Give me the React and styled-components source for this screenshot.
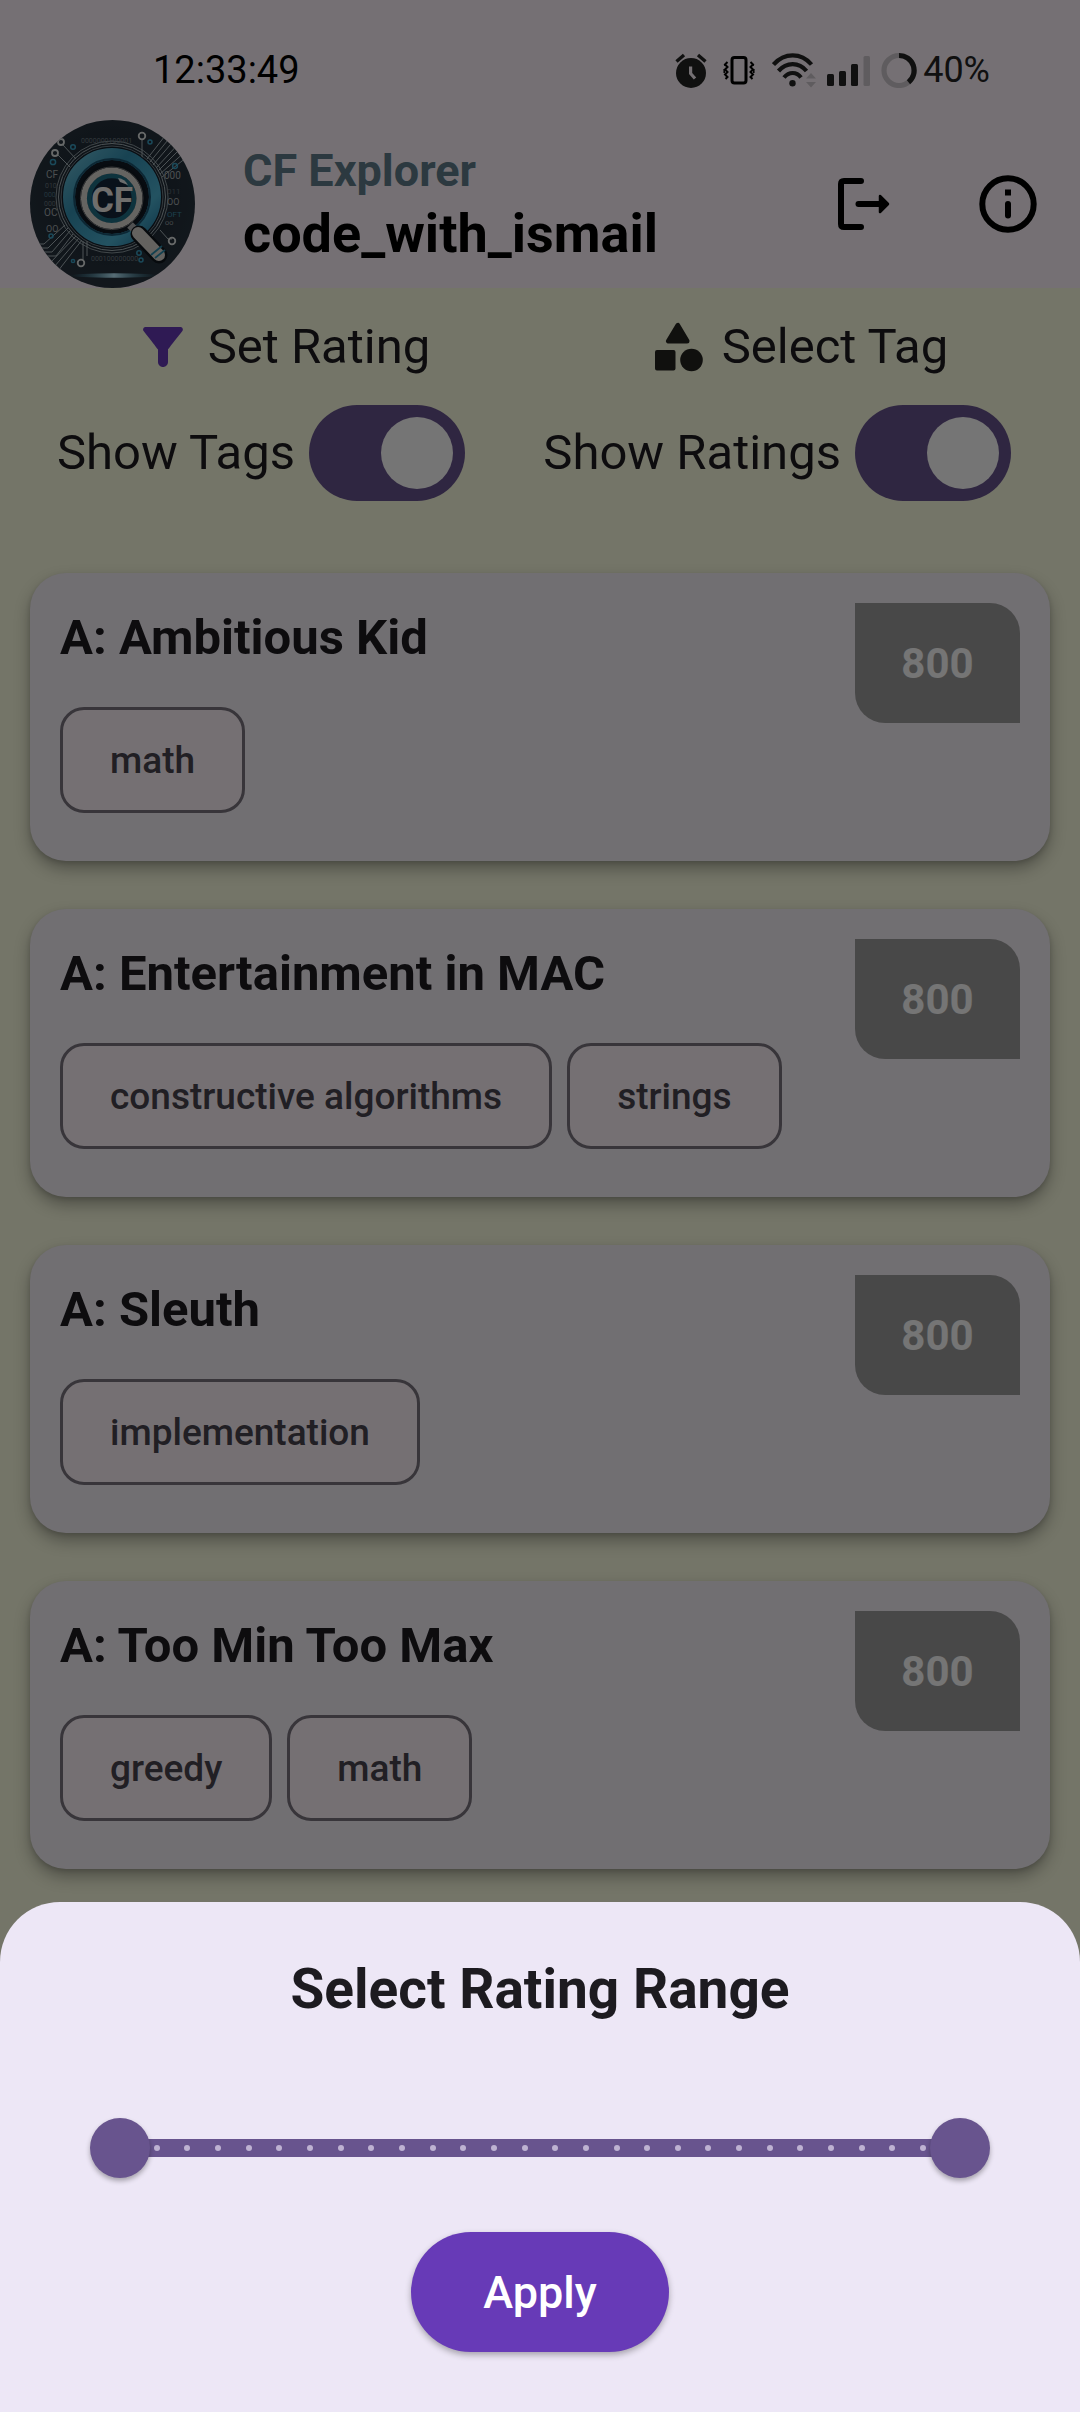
import React, { useState } from "react";
import styled, { createGlobalStyle } from "styled-components";

const GlobalStyle = createGlobalStyle`
  *, *::before, *::after { box-sizing: border-box; }
  body {
    margin: 0;
    font-family: Roboto, "Noto Sans", sans-serif;
    color: #1d1b20;
    background: #fcfee2;
  }
  h1, h2, p, ul { margin: 0; padding: 0; }
  ul { list-style: none; }
  button, input { font: inherit; }
`;

const Page = styled.div`
  min-height: 100vh;
  background: #fcfee2;
`;

const Header = styled.header`
  background: #fff5fc;
  color: #000000;
`;

const StatusBar = styled.div`
  height: 120px;
  padding: 20px 90px 0 153px;
  display: flex;
  align-items: center;
  justify-content: space-between;
  line-height: 48px;
`;

const Clock = styled.span`
  font-size: 38px;
`;

const StatusIcons = styled.div`
  display: flex;
  align-items: center;
  color: #242424;
  font-size: 36px;
`;

const StatusIcon = styled.svg`
  display: block;
  height: 36px;
  width: ${(p) => p.$width}px;
  margin-right: ${(p) => p.$gap}px;
`;

const Toolbar = styled.div`
  height: 168px;
  padding-left: 30px;
  display: flex;
  align-items: center;
`;

const Avatar = styled.svg`
  width: 165px;
  height: 168px;
  border-radius: 50%;
  flex: none;
`;

const Titles = styled.div`
  flex: 1;
  padding-left: 48px;
`;

const AppName = styled.p`
  font-size: 45px;
  line-height: 60px;
  font-weight: 700;
  color: #607d8b;
`;

const Handle = styled.h1`
  font-size: 54px;
  line-height: 66px;
  font-weight: 700;
`;

const IconButton = styled.button`
  width: 144px;
  height: 144px;
  padding: 36px;
  border: 0;
  background: none;
  color: inherit;

  svg { display: block; width: 72px; height: 72px; }
`;

const Filters = styled.section`
  font-size: 49px;
  line-height: 60px;
`;

const ActionRow = styled.div`
  display: grid;
  grid-template-columns: 6fr 5fr;
  height: 117px;
  padding-right: 48px;
`;

const ActionButton = styled.button`
  display: flex;
  align-items: center;
  justify-content: center;
  gap: 15px;
  padding: 0;
  border: 0;
  background: none;
  color: inherit;

  svg { display: block; width: 60px; height: 60px; color: ${(p) => p.$tint}; }
`;

const SwitchRow = styled.div`
  display: flex;
  justify-content: space-between;
  padding: 0 69px 0 57px;
`;

const SwitchLabel = styled.label`
  display: flex;
  align-items: center;
  gap: 14px;
`;

const Switch = styled.input`
  appearance: none;
  margin: 0;
  width: 156px;
  height: 96px;
  padding: 12px;
  border-radius: 48px;
  background: #68548e;
  display: flex;
  justify-content: flex-start;

  &:checked { justify-content: flex-end; }

  &::before {
    content: "";
    width: 72px;
    height: 72px;
    border-radius: 50%;
    background: #ffffff;
  }
`;

const ProblemList = styled.ul`
  padding: 72px 30px 48px;
  display: flex;
  flex-direction: column;
  gap: 48px;
`;

const Card = styled.li`
  display: flex;
  justify-content: space-between;
  align-items: flex-start;
  padding: 30px 30px 48px;
  border-radius: 36px;
  background: #f6f1f9;
  box-shadow: 0 8px 16px rgba(0, 0, 0, 0.3), 0 2px 5px rgba(0, 0, 0, 0.14);
`;

const CardTitle = styled.h2`
  font-size: 49px;
  line-height: 70px;
  font-weight: 700;
`;

const Tags = styled.ul`
  display: flex;
  flex-wrap: wrap;
  gap: 15px;
  padding-top: 34px;
`;

const Tag = styled.li`
  height: 106px;
  padding: 0 47px;
  display: flex;
  align-items: center;
  border: 3px solid #7a757f;
  border-radius: 24px;
  background: #fff4fa;
  color: #49454f;
  font-size: 37px;
  font-weight: 500;
`;

const Rating = styled.span`
  flex: none;
  width: 165px;
  height: 120px;
  display: flex;
  align-items: center;
  justify-content: center;
  border-radius: 0 30px 0 30px;
  background: #9e9e9e;
  color: #ffffff;
  font-size: 42px;
  font-weight: 700;
`;

const Backdrop = styled.div`
  position: fixed;
  inset: 0;
  display: flex;
  flex-direction: column;
  justify-content: flex-end;
  background: rgba(0, 0, 0, 0.54);
`;

const Sheet = styled.section`
  padding: 48px 90px 60px;
  display: flex;
  flex-direction: column;
  align-items: center;
  border-radius: 60px 60px 0 0;
  background: #ede7f6;
`;

const SheetTitle = styled.h2`
  font-size: 55px;
  line-height: 78px;
  font-weight: 700;
`;

const RangeSlider = styled.div`
  width: 100%;
  height: 144px;
  margin: 48px 0 12px;
  display: grid;
  align-items: center;
`;

const Track = styled.div`
  grid-area: 1 / 1;
  height: 18px;
  margin: 0 30px;
  padding: 0 3px;
  display: flex;
  align-items: center;
  justify-content: space-between;
  background: #68548e;
`;

const Tick = styled.span`
  width: 6px;
  height: 6px;
  border-radius: 50%;
  background: #beb2d2;
`;

const RangeInput = styled.input`
  grid-area: 1 / 1;
  appearance: none;
  width: 100%;
  height: 60px;
  margin: 0;
  background: transparent;
  pointer-events: none;
  z-index: 1;

  &::-webkit-slider-thumb {
    appearance: none;
    width: 60px;
    height: 60px;
    border-radius: 50%;
    background: #68548e;
    box-shadow: 0 3px 5px rgba(0, 0, 0, 0.3);
    pointer-events: auto;
  }
`;

const ApplyButton = styled.button`
  height: 120px;
  padding: 0 72px;
  border: 0;
  border-radius: 60px;
  background: #673ab7;
  color: #ffffff;
  font-size: 45px;
  font-weight: 500;
  box-shadow: 0 3px 6px rgba(0, 0, 0, 0.3);
`;

const problems = [
  { name: "A: Ambitious Kid", rating: 800, tags: ["math"] },
  { name: "A: Entertainment in MAC", rating: 800, tags: ["constructive algorithms", "strings"] },
  { name: "A: Sleuth", rating: 800, tags: ["implementation"] },
  { name: "A: Too Min Too Max", rating: 800, tags: ["greedy", "math"] },
];

const MIN_RATING = 800;
const MAX_RATING = 3500;
const STEP = 100;
const ticks = Array.from({ length: (MAX_RATING - MIN_RATING) / STEP + 1 }, (_, i) => i);

function StatusGlyphs() {
  return (
    <>
      <StatusIcon $width={32} $gap={16} viewBox="0 0 32 36" aria-label="Alarm set">
        <circle cx="16" cy="21" r="15" fill="currentColor" />
        <path d="M1.5 9.5L9 3M30.5 9.5L23 3" stroke="currentColor" strokeWidth="3.4" />
        <path d="M15.6 14.5V21.5L20 26.5" stroke="#fff5fc" strokeWidth="3.2" fill="none" />
      </StatusIcon>
      <StatusIcon $width={32} $gap={17} viewBox="0 0 32 36" aria-label="Vibrate" stroke="#000" fill="none">
        <rect x="9" y="5.5" width="14" height="25.5" rx="2.5" strokeWidth="3" />
        <path d="M4.5 10L2 12.5L4.5 15L2 17.5L4.5 20L2 22.5L4.5 25L2.5 27M27.5 10L30 12.5L27.5 15L30 17.5L27.5 20L30 22.5L27.5 25L29.5 27" strokeWidth="2" />
        <path d="M2 12v2M1.2 17v4M30 12v2M30.8 17v4" strokeWidth="1.5" />
      </StatusIcon>
      <StatusIcon $width={45} $gap={10} viewBox="0 0 45 36" aria-label="Wi-Fi">
        <g fill="none" stroke="currentColor" strokeWidth="4.2">
          <path d="M1.5 12.5C12.5 .3 29 .3 39.500 12.5" />
          <path d="M6.5 19C14.5 9.8 27 9.8 34.5 19" />
          <path d="M12 25.5C17 19.5 24.5 19.5 29 25.5" />
        </g>
        <circle cx="20.5" cy="31.3" r="3.2" fill="currentColor" />
        <path d="M39 21l5 5.5H34zM39 35.5l5-5.5H34z" fill="#d0c9cf" />
      </StatusIcon>
      <StatusIcon $width={43} $gap={11} viewBox="0 0 43 36" aria-label="Mobile signal">
        <g fill="currentColor">
          <rect x="0" y="22" width="7" height="12" rx="1.5" />
          <rect x="12" y="19" width="7" height="15" rx="1.5" />
          <rect x="24" y="12" width="7" height="22" rx="1.5" />
        </g>
        <rect x="36.5" y="4" width="6.5" height="30" rx="1.5" fill="#d0c9cf" />
      </StatusIcon>
      <StatusIcon $width={36} $gap={6} viewBox="0 0 36 36" aria-label="Battery" fill="none" strokeWidth="5.2">
        <circle cx="18" cy="18.5" r="15" stroke="#d0c9cf" />
        <path d="M18 3.5A15 15 0 0 1 27.5 30.2" stroke="currentColor" />
      </StatusIcon>
    </>
  );
}

function LogoAvatar() {
  return (
    <Avatar viewBox="0 0 165 168" role="img" aria-label="CF Explorer logo">
      <defs>
        <radialGradient id="sky" cx="50%" cy="45%" r="60%">
          <stop offset="0" stopColor="#16222f" />
          <stop offset="1" stopColor="#2b3640" />
        </radialGradient>
        <linearGradient id="ring" x1="0" y1="0" x2="1" y2="1">
          <stop offset="0" stopColor="#6cc0d8" />
          <stop offset=".35" stopColor="#3592b4" />
          <stop offset=".75" stopColor="#4db4d4" />
          <stop offset="1" stopColor="#2479a0" />
        </linearGradient>
        <linearGradient id="glow">
          <stop offset="0" stopColor="#2f8fb0" stopOpacity="0" />
          <stop offset=".5" stopColor="#bfeeff" />
          <stop offset="1" stopColor="#2f8fb0" stopOpacity="0" />
        </linearGradient>
      </defs>
      <rect width="165" height="168" fill="url(#sky)" />
      <g fill="none" stroke="#a9b6bb" strokeWidth="1">
        <path d="M126 48L152 20H165M128 51L154 25H165M130 54L156 31H165M123 45L146 18M120 42L142 15M117 39L138 12M132 57L157 37H165" />
        <path d="M38 108L18 128H0M40 111L22 132H2M43 114L26 136H6M46 116L20 143M49 118L24 147M52 120L28 151M35 105L14 124H0" />
        <path d="M33 25L46 39M28 35L40 47M112 20V38M53 121V140M57 121V136M130 110L138 119H142" />
        <circle cx="82" cy="77" r="56" strokeOpacity=".8" />
        <circle cx="82" cy="77" r="53.5" />
        <circle cx="82" cy="77" r="51" strokeOpacity=".6" />
        <g strokeWidth="1.8" stroke="#dfe3e2">
          <circle cx="31" cy="22" r="3" />
          <circle cx="25" cy="33" r="3" />
          <circle cx="112" cy="16" r="3.3" />
          <circle cx="51" cy="143" r="3.3" />
          <circle cx="142" cy="121" r="3.3" />
        </g>
        <g strokeWidth="1.5" stroke="#3aa0c4">
          <circle cx="43" cy="27" r="2.3" />
          <circle cx="23" cy="42" r="2.6" />
          <circle cx="120" cy="22" r="2" />
          <circle cx="145" cy="46" r="2.4" />
          <circle cx="21" cy="116" r="2" />
          <circle cx="109" cy="133" r="2.2" />
          <circle cx="111" cy="140" r="2" />
          <circle cx="43" cy="141" r="1.6" />
        </g>
      </g>
      <circle cx="82" cy="77" r="50" fill="#131c27" />
      <circle cx="82" cy="77" r="43" fill="none" stroke="url(#ring)" strokeWidth="12" />
      <circle cx="82" cy="77" r="38" fill="none" stroke="#1b5672" strokeWidth="2" />
      <circle cx="81.7" cy="78.3" r="34.5" fill="#101822" />
      <circle cx="81.7" cy="78.3" r="22.5" fill="#14263a" stroke="#1f6f86" strokeWidth="5" />
      <circle cx="81.7" cy="78.3" r="27.8" fill="none" stroke="#dcd9d4" strokeWidth="6" />
      <circle cx="81.7" cy="78.3" r="31.3" fill="none" stroke="#77797b" strokeWidth="1" />
      <path d="M88 58Q95 59 98 65L90 62Z" fill="#e9eeee" />
      <path d="M100 105L108 113" stroke="#aeb1b2" strokeWidth="8" />
      <path d="M109 114L129 135" stroke="#10161d" strokeWidth="17" strokeLinecap="round" />
      <path d="M108 113L129 135" stroke="#d9d6d0" strokeWidth="12" strokeLinecap="round" />
      <path d="M121 135L132 126M125 138L135 130" stroke="#2d8cad" strokeWidth="1.8" />
      <g fontFamily="Roboto, sans-serif" fill="#a6adb0">
        <text x="82" y="92" fontSize="35" fontWeight="700" textAnchor="middle" fill="#f1efec">CF</text>
        <text x="16" y="58" fontSize="10">CF</text>
        <text x="15" y="68" fontSize="7" fill="#69767e">010</text>
        <text x="14" y="77" fontSize="7" fill="#4f7386">000</text>
        <text x="14" y="86" fontSize="7" fill="#69767e">000</text>
        <text x="14" y="96" fontSize="10">OC</text>
        <text x="16" y="112" fontSize="9">OO</text>
        <text x="134" y="59" fontSize="10">000</text>
        <text x="137" y="74" fontSize="8" fill="#5b6972">011</text>
        <text x="137" y="85" fontSize="9">OO</text>
        <text x="137" y="97" fontSize="8" fill="#3d8ca8">OFT</text>
        <text x="135" y="105" fontSize="6">OO</text>
        <text x="51" y="23" fontSize="7" fill="#6e7a82">0000000100001</text>
        <text x="61" y="141" fontSize="7" fill="#6e7a82">000100000000</text>
      </g>
      <ellipse cx="84" cy="155.5" rx="44" ry="2.2" fill="url(#glow)" />
    </Avatar>
  );
}

function LogoutIcon() {
  return (
    <svg viewBox="0 0 72 72" fill="none" stroke="currentColor" strokeWidth="6" strokeLinecap="round" strokeLinejoin="round" aria-hidden="true">
      <path d="M33 13H16Q13 13 13 16V56Q13 59 16 59H33" />
      <path d="M30.5 36H52" />
      <path d="M52 28L60 36L52 44Z" fill="currentColor" strokeWidth="2.5" />
    </svg>
  );
}

function InfoIcon() {
  return (
    <svg viewBox="0 0 72 72" aria-hidden="true">
      <circle cx="36" cy="36" r="25.7" fill="none" stroke="currentColor" strokeWidth="6" />
      <rect x="33" y="21.5" width="6" height="6" fill="currentColor" />
      <rect x="33" y="33" width="6" height="17.5" rx="3" fill="currentColor" />
    </svg>
  );
}

function FilterIcon() {
  return (
    <svg viewBox="0 0 24 24" fill="currentColor" aria-hidden="true">
      <path d="M4.25 5.61C6.57 8.59 10 13 10 13v5c0 1.1.9 2 2 2s2-.9 2-2v-5s3.43-4.41 5.74-7.39c.51-.66.04-1.61-.79-1.61H5.04c-.83 0-1.3.95-.79 1.61z" />
    </svg>
  );
}

function ShapesIcon() {
  return (
    <svg viewBox="0 0 60 60" fill="currentColor" stroke="currentColor" strokeLinejoin="round" aria-hidden="true">
      <path d="M30.8 8.5L21.5 24H40Z" strokeWidth="5" />
      <rect x="10" y="35" width="16.5" height="16.5" strokeWidth="4" />
      <circle cx="44.5" cy="43" r="11.3" stroke="none" />
    </svg>
  );
}

export default function App() {
  const [showTags, setShowTags] = useState(true);
  const [showRatings, setShowRatings] = useState(true);
  const [low, setLow] = useState(MIN_RATING);
  const [high, setHigh] = useState(MAX_RATING);

  return (
    <Page>
      <GlobalStyle />
      <Header>
        <StatusBar>
          <Clock>12:33:49</Clock>
          <StatusIcons>
            <StatusGlyphs />
            <span>40%</span>
          </StatusIcons>
        </StatusBar>
        <Toolbar>
          <LogoAvatar />
          <Titles>
            <AppName>CF Explorer</AppName>
            <Handle>code_with_ismail</Handle>
          </Titles>
          <IconButton type="button" aria-label="Log out"><LogoutIcon /></IconButton>
          <IconButton type="button" aria-label="About"><InfoIcon /></IconButton>
        </Toolbar>
      </Header>

      <main>
        <Filters>
          <ActionRow>
            <ActionButton type="button" $tint="#673ab7"><FilterIcon />Set Rating</ActionButton>
            <ActionButton type="button" $tint="#242420"><ShapesIcon />Select Tag</ActionButton>
          </ActionRow>
          <SwitchRow>
            <SwitchLabel>
              Show Tags
              <Switch type="checkbox" checked={showTags} onChange={(e) => setShowTags(e.target.checked)} />
            </SwitchLabel>
            <SwitchLabel>
              Show Ratings
              <Switch type="checkbox" checked={showRatings} onChange={(e) => setShowRatings(e.target.checked)} />
            </SwitchLabel>
          </SwitchRow>
        </Filters>

        <ProblemList>
          {problems.map((problem) => (
            <Card key={problem.name}>
              <div>
                <CardTitle>{problem.name}</CardTitle>
                {showTags && (
                  <Tags>
                    {problem.tags.map((tag) => <Tag key={tag}>{tag}</Tag>)}
                  </Tags>
                )}
              </div>
              {showRatings && <Rating>{problem.rating}</Rating>}
            </Card>
          ))}
        </ProblemList>
      </main>

      <Backdrop>
        <Sheet role="dialog" aria-labelledby="sheet-title">
          <SheetTitle id="sheet-title">Select Rating Range</SheetTitle>
          <RangeSlider>
            <Track>{ticks.map((tick) => <Tick key={tick} />)}</Track>
            <RangeInput
              type="range" aria-label="Minimum rating" min={MIN_RATING} max={MAX_RATING} step={STEP}
              value={low} onChange={(e) => setLow(Math.min(Number(e.target.value), high))}
            />
            <RangeInput
              type="range" aria-label="Maximum rating" min={MIN_RATING} max={MAX_RATING} step={STEP}
              value={high} onChange={(e) => setHigh(Math.max(Number(e.target.value), low))}
            />
          </RangeSlider>
          <ApplyButton type="button">Apply</ApplyButton>
        </Sheet>
      </Backdrop>
    </Page>
  );
}
